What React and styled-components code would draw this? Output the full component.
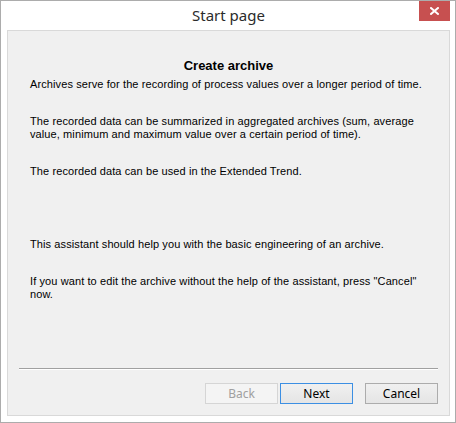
import React from 'react';
import styled, { createGlobalStyle } from 'styled-components';

const GlobalStyle = createGlobalStyle`
  html, body {
    margin: 0;
    padding: 0;
    background: #ffffff;
  }
  * {
    box-sizing: border-box;
  }
`;

const paragraphs = [
  { gap: 4, text: 'Archives serve for the recording of process values over a longer period of time.' },
  { gap: 24, text: 'The recorded data can be summarized in aggregated archives (sum, average value, minimum and maximum value over a certain period of time).' },
  { gap: 24, text: 'The recorded data can be used in the Extended Trend.' },
  { gap: 60, text: 'This assistant should help you with the basic engineering of an archive.' },
  { gap: 24, text: 'If you want to edit the archive without the help of the assistant, press "Cancel" now.' },
];

function CloseIcon() {
  return (
    <svg width="9" height="8" viewBox="0 0 9 8">
      <path d="M1 1 L8 7 M8 1 L1 7" stroke="#ffffff" strokeWidth="2" strokeLinecap="square" fill="none" />
    </svg>
  );
}

export default function App() {
  return (
    <>
      <GlobalStyle />
      <Window>
        <TitleBar>
          <span />
          <Caption>Start page</Caption>
          <CloseButton aria-label="Close">
            <CloseIcon />
          </CloseButton>
        </TitleBar>

        <Panel>
          <Heading>Create archive</Heading>
          {paragraphs.map((p, i) => (
            <Paragraph key={i} $gap={p.gap}>{p.text}</Paragraph>
          ))}

          <Spacer />
          <Separator />

          <ButtonRow>
            <DialogButton disabled>Back</DialogButton>
            <DialogButton $primary>Next</DialogButton>
            <DialogButton $spaced>Cancel</DialogButton>
          </ButtonRow>
        </Panel>
      </Window>
    </>
  );
}

const Window = styled.div`
  width: 456px;
  height: 423px;
  display: flex;
  flex-direction: column;
  background: #ffffff;
  border: 1px solid #acacac;
  padding: 0 5px 6px 6px;
`;

const TitleBar = styled.div`
  height: 29px;
  display: grid;
  grid-template-columns: 1fr auto 1fr;
  align-items: start;
`;

const Caption = styled.div`
  font-family: "Noto Sans", "Open Sans", sans-serif;
  font-size: 15px;
  line-height: 28px;
  color: #2b2b2b;
`;

const CloseButton = styled.button`
  justify-self: end;
  width: 31px;
  height: 20px;
  margin: 0;
  padding: 0;
  border: none;
  background: #c75050;
  display: flex;
  align-items: center;
  justify-content: center;
`;

const Panel = styled.div`
  flex: 1;
  display: flex;
  flex-direction: column;
  background: #f0f0f0;
  border: 1px solid #d9d9d9;
  padding: 27px 11px 11px 22px;
`;

const Heading = styled.div`
  font-family: "Liberation Sans", Arial, sans-serif;
  font-weight: bold;
  font-size: 13px;
  line-height: 16px;
  text-align: center;
  color: #000000;
  padding-right: 11px;
`;

const Paragraph = styled.p`
  margin: ${(p) => p.$gap}px 0 0 0;
  font-family: "Liberation Sans", Arial, sans-serif;
  font-size: 11px;
  line-height: 13px;
  letter-spacing: 0.1px;
  color: #000000;
  padding-right: 10px;
`;

const Spacer = styled.div`
  flex: 1;
`;

const Separator = styled.div`
  height: 2px;
  margin-left: -11px;
  border-top: 1px solid #a0a0a0;
  border-bottom: 1px solid #ffffff;
`;

const ButtonRow = styled.div`
  display: flex;
  justify-content: flex-end;
  gap: 2px;
  margin-top: 13px;
`;

const DialogButton = styled.button`
  width: 73px;
  height: 21px;
  margin: 0 0 0 ${(p) => (p.$spaced ? '10px' : '0')};
  padding: 0;
  font-family: "Noto Sans", "Open Sans", sans-serif;
  font-size: 12px;
  line-height: 19px;
  color: #000000;
  background: linear-gradient(#f0f0f0, #e5e5e5);
  border: 1px solid ${(p) => (p.$primary ? '#3c8fe3' : '#acacac')};

  &:disabled {
    color: #a0a0a0;
    background: #f4f4f4;
    border-color: #d5d5d5;
  }
`;
